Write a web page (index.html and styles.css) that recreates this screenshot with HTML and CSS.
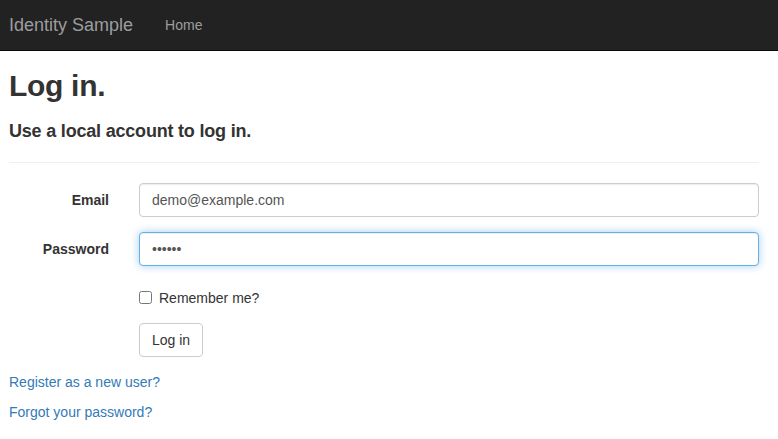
FILE: index.html
```html
<!DOCTYPE html>
<html lang="en">
<head>
<meta charset="utf-8">
<title>Log in - Identity Sample</title>
<link rel="stylesheet" href="styles.css">
</head>
<body>
<nav class="navbar">
  <a class="brand" href="#">Identity Sample</a>
  <a class="nav-link" href="#">Home</a>
</nav>
<main class="content">
  <h2 class="title">Log in.</h2>
  <section class="login">
    <h4 class="subtitle">Use a local account to log in.</h4>
    <hr class="divider">
    <form class="form">
      <div class="form-group">
        <label class="control-label" for="email">Email</label>
        <div class="control"><input class="input" id="email" type="text" value="demo@example.com"></div>
      </div>
      <div class="form-group">
        <label class="control-label" for="password">Password</label>
        <div class="control"><input class="input focused" id="password" type="password" value="secret"></div>
      </div>
      <div class="form-group">
        <div class="control offset">
          <label class="checkbox"><input type="checkbox" class="check"><span>Remember me?</span></label>
        </div>
      </div>
      <div class="form-group">
        <div class="control offset"><button type="button" class="btn">Log in</button></div>
      </div>
      <p class="link-line"><a href="#">Register as a new user?</a></p>
      <p class="link-line"><a href="#">Forgot your password?</a></p>
    </form>
  </section>
</main>
</body>
</html>
```
FILE: styles.css
```css
* { box-sizing: border-box; }
html, body { margin: 0; padding: 0; }
body {
  font-family: "Liberation Sans", Arial, sans-serif;
  font-size: 14px;
  line-height: 20px;
  color: #333;
  background: #fff;
}
a { color: #337ab7; text-decoration: none; }

.navbar {
  display: flex;
  align-items: center;
  height: 51px;
  background: #222;
  border-bottom: 1px solid #080808;
  padding-left: 9px;
}
.brand {
  font-size: 18px;
  line-height: 20px;
  color: #9d9d9d;
  padding: 15px 0;
  margin-right: 32px;
}
.nav-link {
  color: #9d9d9d;
  font-size: 14px;
  line-height: 20px;
  padding: 15px 0;
}

.content {
  width: 759px;
  padding-left: 9px;
}
.title {
  margin: 18px 0 10px;
  font-size: 30px;
  font-weight: bold;
  letter-spacing: -0.3px;
  line-height: 1.1;
}
.login { display: flow-root; }
.subtitle {
  margin: 10px 0;
  font-size: 18px;
  font-weight: bold;
  letter-spacing: -0.2px;
  line-height: 1.1;
}
.divider {
  margin: 20px 0;
  border: 0;
  border-top: 1px solid #eee;
  height: 0;
}
.form-group {
  display: grid;
  grid-template-columns: 130px 1fr;
  margin: 0 -15px 15px;
}
.control-label {
  padding: 7px 15px 0;
  text-align: right;
  font-weight: bold;
}
.control { padding: 0 15px; }
.offset { grid-column: 2; }
.input {
  display: block;
  width: 100%;
  height: 34px;
  padding: 6px 12px;
  font-family: inherit;
  font-size: 14px;
  color: #555;
  background: #fff;
  border: 1px solid #ccc;
  border-radius: 4px;
  box-shadow: inset 0 1px 1px rgba(0,0,0,.075);
  outline: none;
}
.input.focused {
  border-color: #66afe9;
  box-shadow: inset 0 1px 1px rgba(0,0,0,.075), 0 0 8px rgba(102,175,233,.6);
}
.checkbox {
  display: flex;
  align-items: center;
  gap: 7px;
  padding-top: 7px;
  min-height: 27px;
  font-weight: normal;
}
.check {
  margin: 0;
  width: 13px;
  height: 13px;
}
.btn {
  height: 34px;
  padding: 6px 12px;
  font-family: inherit;
  font-size: 14px;
  line-height: 20px;
  color: #333;
  background: #fff;
  border: 1px solid #ccc;
  border-radius: 4px;
}
.link-line { margin: 0 0 10px; }
```
